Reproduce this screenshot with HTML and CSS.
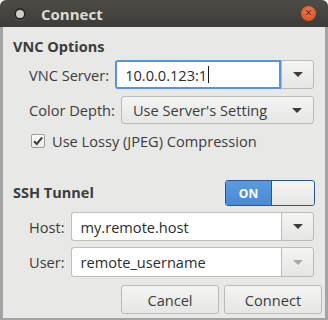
FILE: index.html
```html
<!DOCTYPE html>
<html lang="en">
<head>
    <meta charset="UTF-8">
    <title>Connect</title>
    <link rel="stylesheet" href="styles.css">
</head>
<body>
    <div class="window">
        <div class="titlebar">
            <span class="win-icon"></span>
            <span class="title">Connect</span>
            <span class="close">&times;</span>
        </div>
        <div class="content">
            <div class="heading">VNC Options</div>

            <div class="row row-server">
                <label class="lbl">VNC Server:</label>
                <div class="combo">
                    <div class="entry focused">10.0.0.123:1<span class="caret"></span></div>
                    <div class="drop"><span class="arrow"></span></div>
                </div>
            </div>

            <div class="row row-depth">
                <label class="lbl">Color Depth:</label>
                <div class="select">
                    <span>Use Server's Setting</span>
                    <span class="arrow"></span>
                </div>
            </div>

            <div class="row row-check">
                <span class="check">
                    <svg width="12" height="12" viewBox="0 0 12 12"><path d="M2 6.2 L4.8 9 L10.2 2.4" fill="none" stroke="#3c3c3c" stroke-width="2.1"/></svg>
                </span>
                <span class="check-text">Use Lossy (JPEG) Compression</span>
            </div>

            <div class="row row-ssh">
                <div class="heading">SSH Tunnel</div>
                <div class="switch">
                    <span class="on">ON</span>
                    <span class="knob"></span>
                </div>
            </div>

            <div class="row row-host">
                <label class="lbl">Host:</label>
                <div class="combo">
                    <div class="entry">my.remote.host</div>
                    <div class="drop"><span class="arrow"></span></div>
                </div>
            </div>

            <div class="row row-user">
                <label class="lbl">User:</label>
                <div class="combo">
                    <div class="entry">remote_username</div>
                    <div class="drop"><span class="arrow dim"></span></div>
                </div>
            </div>

            <div class="row buttons">
                <button class="btn">Cancel</button>
                <button class="btn">Connect</button>
            </div>
        </div>
    </div>
</body>
</html>
```

FILE: styles.css
```css
body {
    margin: 0;
    background: #ffffff;
    font-family: 'Open Sans', sans-serif;
    font-size: 14.6px;
    color: #3c3c3c;
}
.window {
    width: 328px;
    height: 320px;
    display: flex;
    flex-direction: column;
}
.titlebar {
    height: 27px;
    flex: none;
    background: linear-gradient(#4d4c47, #3c3b37);
    border-radius: 6px 6px 0 0;
    display: flex;
    align-items: center;
    padding: 0 12px 0 14px;
}
.win-icon {
    width: 8px;
    height: 8px;
    border-radius: 50%;
    background: #cfcdc8;
    border: 2px solid #2b2a27;
    box-shadow: 0 1px 0 #5a5954;
}
.title {
    margin-left: 15px;
    color: #dfdbd2;
    font-weight: bold;
    font-size: 15px;
    flex: 1;
}
.close {
    width: 15px;
    height: 15px;
    border-radius: 50%;
    background: radial-gradient(circle at 50% 35%, #f2784b, #dd4814);
    color: #3a1d10;
    font-size: 12px;
    line-height: 14px;
    text-align: center;
}
.content {
    flex: 1;
    background: #e8e8e7;
    border: 3px solid #a3a3a3;
    border-top: none;
    border-bottom-width: 2px;
    padding: 0 3px 0 10px;
    display: flex;
    flex-direction: column;
}
.heading {
    font-weight: bold;
    font-size: 14.5px;
    height: 20px;
    line-height: 20px;
    margin-top: 10px;
}
.row {
    display: flex;
    align-items: center;
    padding-left: 16px;
    margin-right: 8px;
}
.lbl {
    margin-right: 6px;
    white-space: nowrap;
}
.row-server { height: 29px; margin-top: 3px; }
.row-depth { height: 28px; margin-top: 7px; }
.row-check { height: 28px; margin-top: 3px; padding-left: 18px; }
.row-ssh { height: 26px; margin-top: 25px; padding-left: 0; justify-content: space-between; }
.row-ssh .heading { margin-top: 0; }
.row-host { height: 29px; margin-top: 6px; }
.row-user { height: 30px; margin-top: 6px; }
.buttons { height: 29px; margin-top: 8px; margin-right: 0; justify-content: flex-end; gap: 5px; }

.combo {
    flex: 1;
    height: 100%;
    display: flex;
}
.entry {
    flex: 1;
    display: flex;
    align-items: center;
    padding-left: 9px;
    background: #ffffff;
    border: 1px solid #c2bfba;
    border-right: none;
    border-radius: 3px 0 0 3px;
    color: #2c2c2c;
}
.entry.focused {
    border: 2px solid #5294e2;
    padding-left: 8px;
}
.caret {
    width: 1px;
    height: 17px;
    background: #1a1a1a;
    margin-left: 1px;
}
.drop {
    width: 33px;
    box-sizing: border-box;
    border: 1px solid #bdbab5;
    border-radius: 0 3px 3px 0;
    background: linear-gradient(#f4f4f3, #e6e6e5);
    display: flex;
    align-items: center;
    justify-content: center;
}
.arrow {
    width: 0;
    height: 0;
    border-left: 5px solid transparent;
    border-right: 5px solid transparent;
    border-top: 5px solid #3c3c3c;
}
.arrow.dim {
    border-top-color: #a9a9a8;
}
.select {
    flex: 1;
    height: 100%;
    box-sizing: border-box;
    border: 1px solid #bdbab5;
    border-radius: 3px;
    background: linear-gradient(#f4f4f3, #e6e6e5);
    display: flex;
    align-items: center;
    justify-content: space-between;
    padding: 0 11px 0 11px;
}
.check {
    width: 14px;
    height: 14px;
    box-sizing: border-box;
    border: 1px solid #9f9b95;
    border-radius: 2px;
    background: linear-gradient(#ffffff, #ececeb);
    display: flex;
    align-items: center;
    justify-content: center;
    margin-right: 7px;
}
.switch {
    width: 90px;
    height: 26px;
    box-sizing: border-box;
    border: 1px solid #29578c;
    border-radius: 3px;
    display: flex;
    overflow: hidden;
    margin-right: -1px;
}
.on {
    width: 45px;
    background: linear-gradient(#5a9be0, #4a89d3);
    color: #ffffff;
    font-weight: bold;
    font-size: 12px;
    display: flex;
    align-items: center;
    justify-content: center;
}
.knob {
    flex: 1;
    background: linear-gradient(#f6f6f5, #e4e4e3);
    border-left: 1px solid #29578c;
    border-radius: 0 2px 2px 0;
}
.btn {
    width: 98px;
    height: 29px;
    font-family: inherit;
    font-size: 14.6px;
    color: #3c3c3c;
    border: 1px solid #bdbab5;
    border-radius: 3px;
    background: linear-gradient(#f4f4f3, #e6e6e5);
    padding: 0;
}
```
